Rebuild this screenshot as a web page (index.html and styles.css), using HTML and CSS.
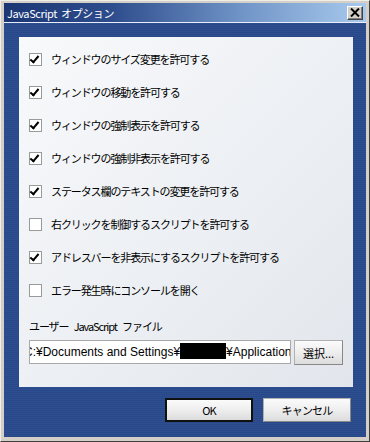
FILE: index.html
```html
<html>
  <head>
    <title>JavaScript オプション</title>
    <link rel="stylesheet" href="styles.css">
  </head>
  <body>
    <div class="window">
      <div class="titlebar">
        <span class="title">JavaScript オプション</span>
        <span class="close">
          <svg width="10" height="9" viewBox="0 0 10 9">
            <path d="M1 0.5 L9 8.5 M9 0.5 L1 8.5" stroke="#000" stroke-width="2" />
          </svg>
        </span>
      </div>
      <div class="client">
        <div class="panel">
          <div class="row"><span class="check on"></span>ウィンドウのサイズ変更を許可する</div>
          <div class="row"><span class="check on"></span>ウィンドウの移動を許可する</div>
          <div class="row"><span class="check on"></span>ウィンドウの強制表示を許可する</div>
          <div class="row"><span class="check on"></span>ウィンドウの強制非表示を許可する</div>
          <div class="row"><span class="check on"></span>ステータス欄のテキストの変更を許可する</div>
          <div class="row"><span class="check"></span>右クリックを制御するスクリプトを許可する</div>
          <div class="row"><span class="check on"></span>アドレスバーを非表示にするスクリプトを許可する</div>
          <div class="row"><span class="check"></span>エラー発生時にコンソールを開く</div>

          <div class="file-label">ユーザー JavaScript ファイル</div>
          <div class="file-row">
            <div class="path"><span class="path-text">C:¥Documents and Settings¥<span class="redact"></span>¥Application</span></div>
            <div class="btn browse">選択...</div>
          </div>
        </div>
        <div class="actions">
          <div class="btn default">OK</div>
          <div class="btn">キャンセル</div>
        </div>
      </div>
    </div>
  </body>
</html>
```

FILE: styles.css
```css
body {
  margin: 0px;
  font-family: "Noto Sans CJK JP", "DejaVu Sans", sans-serif;
  font-size: 11px;
}

.window {
  width: 370px;
  height: 442px;
  box-sizing: border-box;
  background: #d4d0c8;
  border-top: 1px solid #f0eee8;
  border-left: 1px solid #f0eee8;
  border-right: 1px solid #404040;
  border-bottom: 1px solid #404040;
  padding: 2px 3px 4px 3px;
  display: flex;
  flex-direction: column;
}

.titlebar {
  height: 19px;
  flex: none;
  display: flex;
  align-items: center;
  justify-content: space-between;
  padding: 0px 3px 0px 3px;
  background: linear-gradient(to right, #1b3673 0%, #2e4d8d 30%, #6f93c6 65%, #a8caee 100%);
  border-bottom: 1px solid #e8eef8;
}

.title {
  color: #fff;
  font-size: 11px;
  letter-spacing: -0.4px;
  word-spacing: 2px;
}

.close {
  width: 14px;
  height: 12px;
  display: flex;
  align-items: center;
  justify-content: center;
  background: #d4d0c8;
  border-top: 1px solid #fff;
  border-left: 1px solid #fff;
  border-right: 1px solid #404040;
  border-bottom: 1px solid #404040;
  box-shadow: inset -1px -1px 0px #808080;
}

.client {
  flex: 1;
  background: repeating-linear-gradient(to bottom, #2d4f90 0px, #2d4f90 1px, #28488a 1px, #28488a 2px);
  padding: 14px 14px 0px 15px;
  display: flex;
  flex-direction: column;
}

.panel {
  height: 350px;
  width: 334px;
  box-sizing: border-box;
  background: linear-gradient(135deg, #f8f9fb 0%, #eceff3 55%, #e2e6ec 100%);
  padding: 16px 0px 0px 10px;
  color: #000;
}

.row {
  height: 33px;
  display: flex;
  align-items: flex-start;
  letter-spacing: -1.1px;
  line-height: 13px;
}

.check {
  width: 11px;
  height: 11px;
  flex: none;
  margin-right: 9px;
  background: #fff;
  border: 1px solid #9a9a9a;
  position: relative;
}

.check.on::after {
  content: "";
  position: absolute;
  left: 2px;
  top: 0px;
  width: 3px;
  height: 7px;
  border-right: 2px solid #000;
  border-bottom: 2px solid #000;
  transform: rotate(40deg);
}

.file-label {
  margin-top: 3px;
  height: 20px;
  letter-spacing: -1.1px;
  word-spacing: 4px;
  line-height: 13px;
}

.file-row {
  display: flex;
  align-items: flex-start;
  gap: 3px;
}

.path {
  width: 260px;
  height: 22px;
  background: #fff;
  border: 1px solid #a8a8a8;
  overflow: hidden;
  white-space: nowrap;
  line-height: 22px;
  font-family: "Liberation Sans", "Noto Sans CJK JP", sans-serif;
  font-size: 12px;
}

.path-text {
  display: inline-block;
  margin-left: -6px;
}

.redact {
  display: inline-block;
  width: 46px;
  height: 16px;
  background: #000;
  vertical-align: -3px;
}

.btn {
  height: 22px;
  box-sizing: border-box;
  display: flex;
  align-items: center;
  justify-content: center;
  background: linear-gradient(to bottom, #fbfbfb 0%, #eeeeee 50%, #dcdcdc 100%);
  border: 1px solid #b0b0b0;
  border-right-color: #888;
  border-bottom-color: #888;
  letter-spacing: -0.8px;
}

.browse {
  width: 49px;
  height: 25px;
  letter-spacing: 0px;
}

.actions {
  display: flex;
  justify-content: flex-end;
  gap: 10px;
  padding-top: 11px;
  padding-right: 1px;
}

.actions .btn {
  width: 88px;
  height: 24px;
}

.actions .default {
  border: 2px solid #101010;
}
```
